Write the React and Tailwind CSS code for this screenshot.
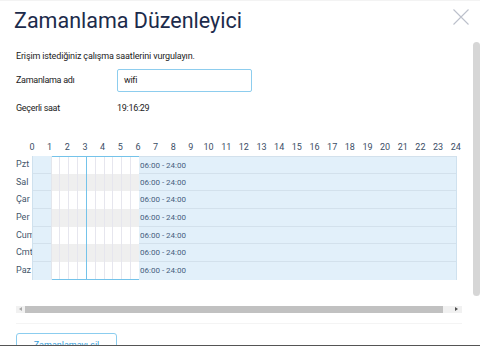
import React from "react";

const hours = Array.from({ length: 25 }, (_, i) => i);
const days = ["Pzt", "Sal", "Çar", "Per", "Cum", "Cmt", "Paz"];
const halves = Array.from({ length: 10 }, (_, i) => i);

export default function App() {
  return (
    <div className="w-[480px] h-[346px] overflow-hidden bg-white flex flex-col font-['Roboto',sans-serif] text-[#222]">
      {/* header */}
      <div className="h-[42px] shrink-0 flex items-start justify-between border-t border-[#f3f3f3] pl-[14px] pr-[11px]">
        <h1 className="text-[21.5px] leading-[22px] mt-[9px] text-[#1c2b4b]">Zamanlama Düzenleyici</h1>
        <svg width="16" height="16" viewBox="0 0 16 16" className="mt-[8px]">
          <path d="M0.5 0.5 L15.5 15.5 M15.5 0.5 L0.5 15.5" stroke="#bcc0cb" strokeWidth="1.1" fill="none" />
        </svg>
      </div>

      {/* body */}
      <div className="flex-1 min-h-0 flex">
        <div className="flex-1 pl-4 overflow-hidden">
          <p className="mt-[7px] h-[14px] leading-[14px] text-[9px] tracking-[-0.15px]">
            Erişim istediğiniz çalışma saatlerini vurgulayın.
          </p>

          <div className="mt-[6px] h-[23px] flex items-center text-[9px] tracking-[-0.3px]">
            <span className="w-[101px]">Zamanlama adı</span>
            <div className="w-[135px] h-[23px] border-[1.5px] border-[#8dcdee] rounded-[2px] flex items-center pl-[6px]">
              wifi
            </div>
          </div>

          <div className="mt-[10px] h-[14px] flex items-center text-[9px] tracking-[-0.3px]">
            <span className="w-[101px]">Geçerli saat</span>
            <span>19:16:29</span>
          </div>

          {/* hour labels */}
          <div className="mt-[25px] h-[12px] flex ml-[7.17px] text-[9px] leading-[12px] text-[#3b4d66]">
            {hours.map((h) => (
              <span key={h} className="w-[17.67px] shrink-0 text-center">{h}</span>
            ))}
          </div>

          {/* grid */}
          <div className="mt-[3px] flex">
            <div className="w-[16px] shrink-0 text-[9px] text-[#45566b]">
              {days.map((d) => (
                <div key={d} className="h-[17.67px] leading-[17.67px] whitespace-nowrap">{d}</div>
              ))}
            </div>

            <div className="flex border-l border-r border-[#cfe1ee]">
              <div className="w-[17.67px] shrink-0">
                {days.map((d, i) => (
                  <div
                    key={d}
                    className={`h-[17.67px] bg-[#e2f0fa] border-[#d3e1ec] ${i < 6 ? "border-b" : ""}`}
                  />
                ))}
              </div>

              <div className="relative w-[88.33px] shrink-0 border-l border-[#e3e6ec]">
                {days.map((d, i) => (
                  <div key={d} className={`h-[17.67px] flex ${i % 2 ? "bg-[#efefef]" : "bg-white"}`}>
                    {halves.map((k) => (
                      <div key={k} className={`w-[8.83px] shrink-0 ${k < 9 ? "border-r border-[#e6e6ee]" : ""}`} />
                    ))}
                  </div>
                ))}
                <div className="absolute inset-0 border-y border-[#74c3ea] pointer-events-none" />
                <div className="absolute top-0 bottom-0 left-[34px] w-px bg-[#74c3ea]" />
              </div>

              <div className="w-[317px] shrink-0">
                {days.map((d, i) => (
                  <div
                    key={d}
                    className={`h-[17.67px] bg-[#e2f0fa] border-[#d3e1ec] text-[8px] leading-[17px] pl-[1px] text-[#46607e] ${i < 6 ? "border-b" : ""} ${i === 0 ? "border-t" : ""}`}
                  >
                    06:00 - 24:00
                  </div>
                ))}
              </div>
            </div>
          </div>

          {/* horizontal scrollbar */}
          <div className="mt-[26px] w-[446px] h-[7px] flex bg-[#f1f1f1]">
            <div className="w-[9px] flex items-center justify-center">
              <svg width="3" height="4" viewBox="0 0 3 4"><path d="M3 0 L0 2 L3 4Z" fill="#a8a8a8" /></svg>
            </div>
            <div className="w-[418px] bg-[#c1c1c1]" />
            <div className="flex-1 flex items-center justify-end pr-[4px]">
              <svg width="3" height="4" viewBox="0 0 3 4"><path d="M0 0 L3 2 L0 4Z" fill="#505050" /></svg>
            </div>
          </div>

          <div className="mt-[10px] w-[446px] h-px bg-[#f4f4f4]" />

          <button className="mt-[9px] w-[101px] h-[27px] border-[1.5px] border-[#8bcdef] rounded-[3px] text-[9px] text-[#3aa0da]">
            Zamanlamayı sil
          </button>
        </div>

        <div className="w-[7px] shrink-0">
          <div className="h-[254px] bg-[#d6d6d6] rounded-full" />
        </div>
      </div>

      <div className="h-[1.5px] shrink-0 bg-[#555]" />
    </div>
  );
}
